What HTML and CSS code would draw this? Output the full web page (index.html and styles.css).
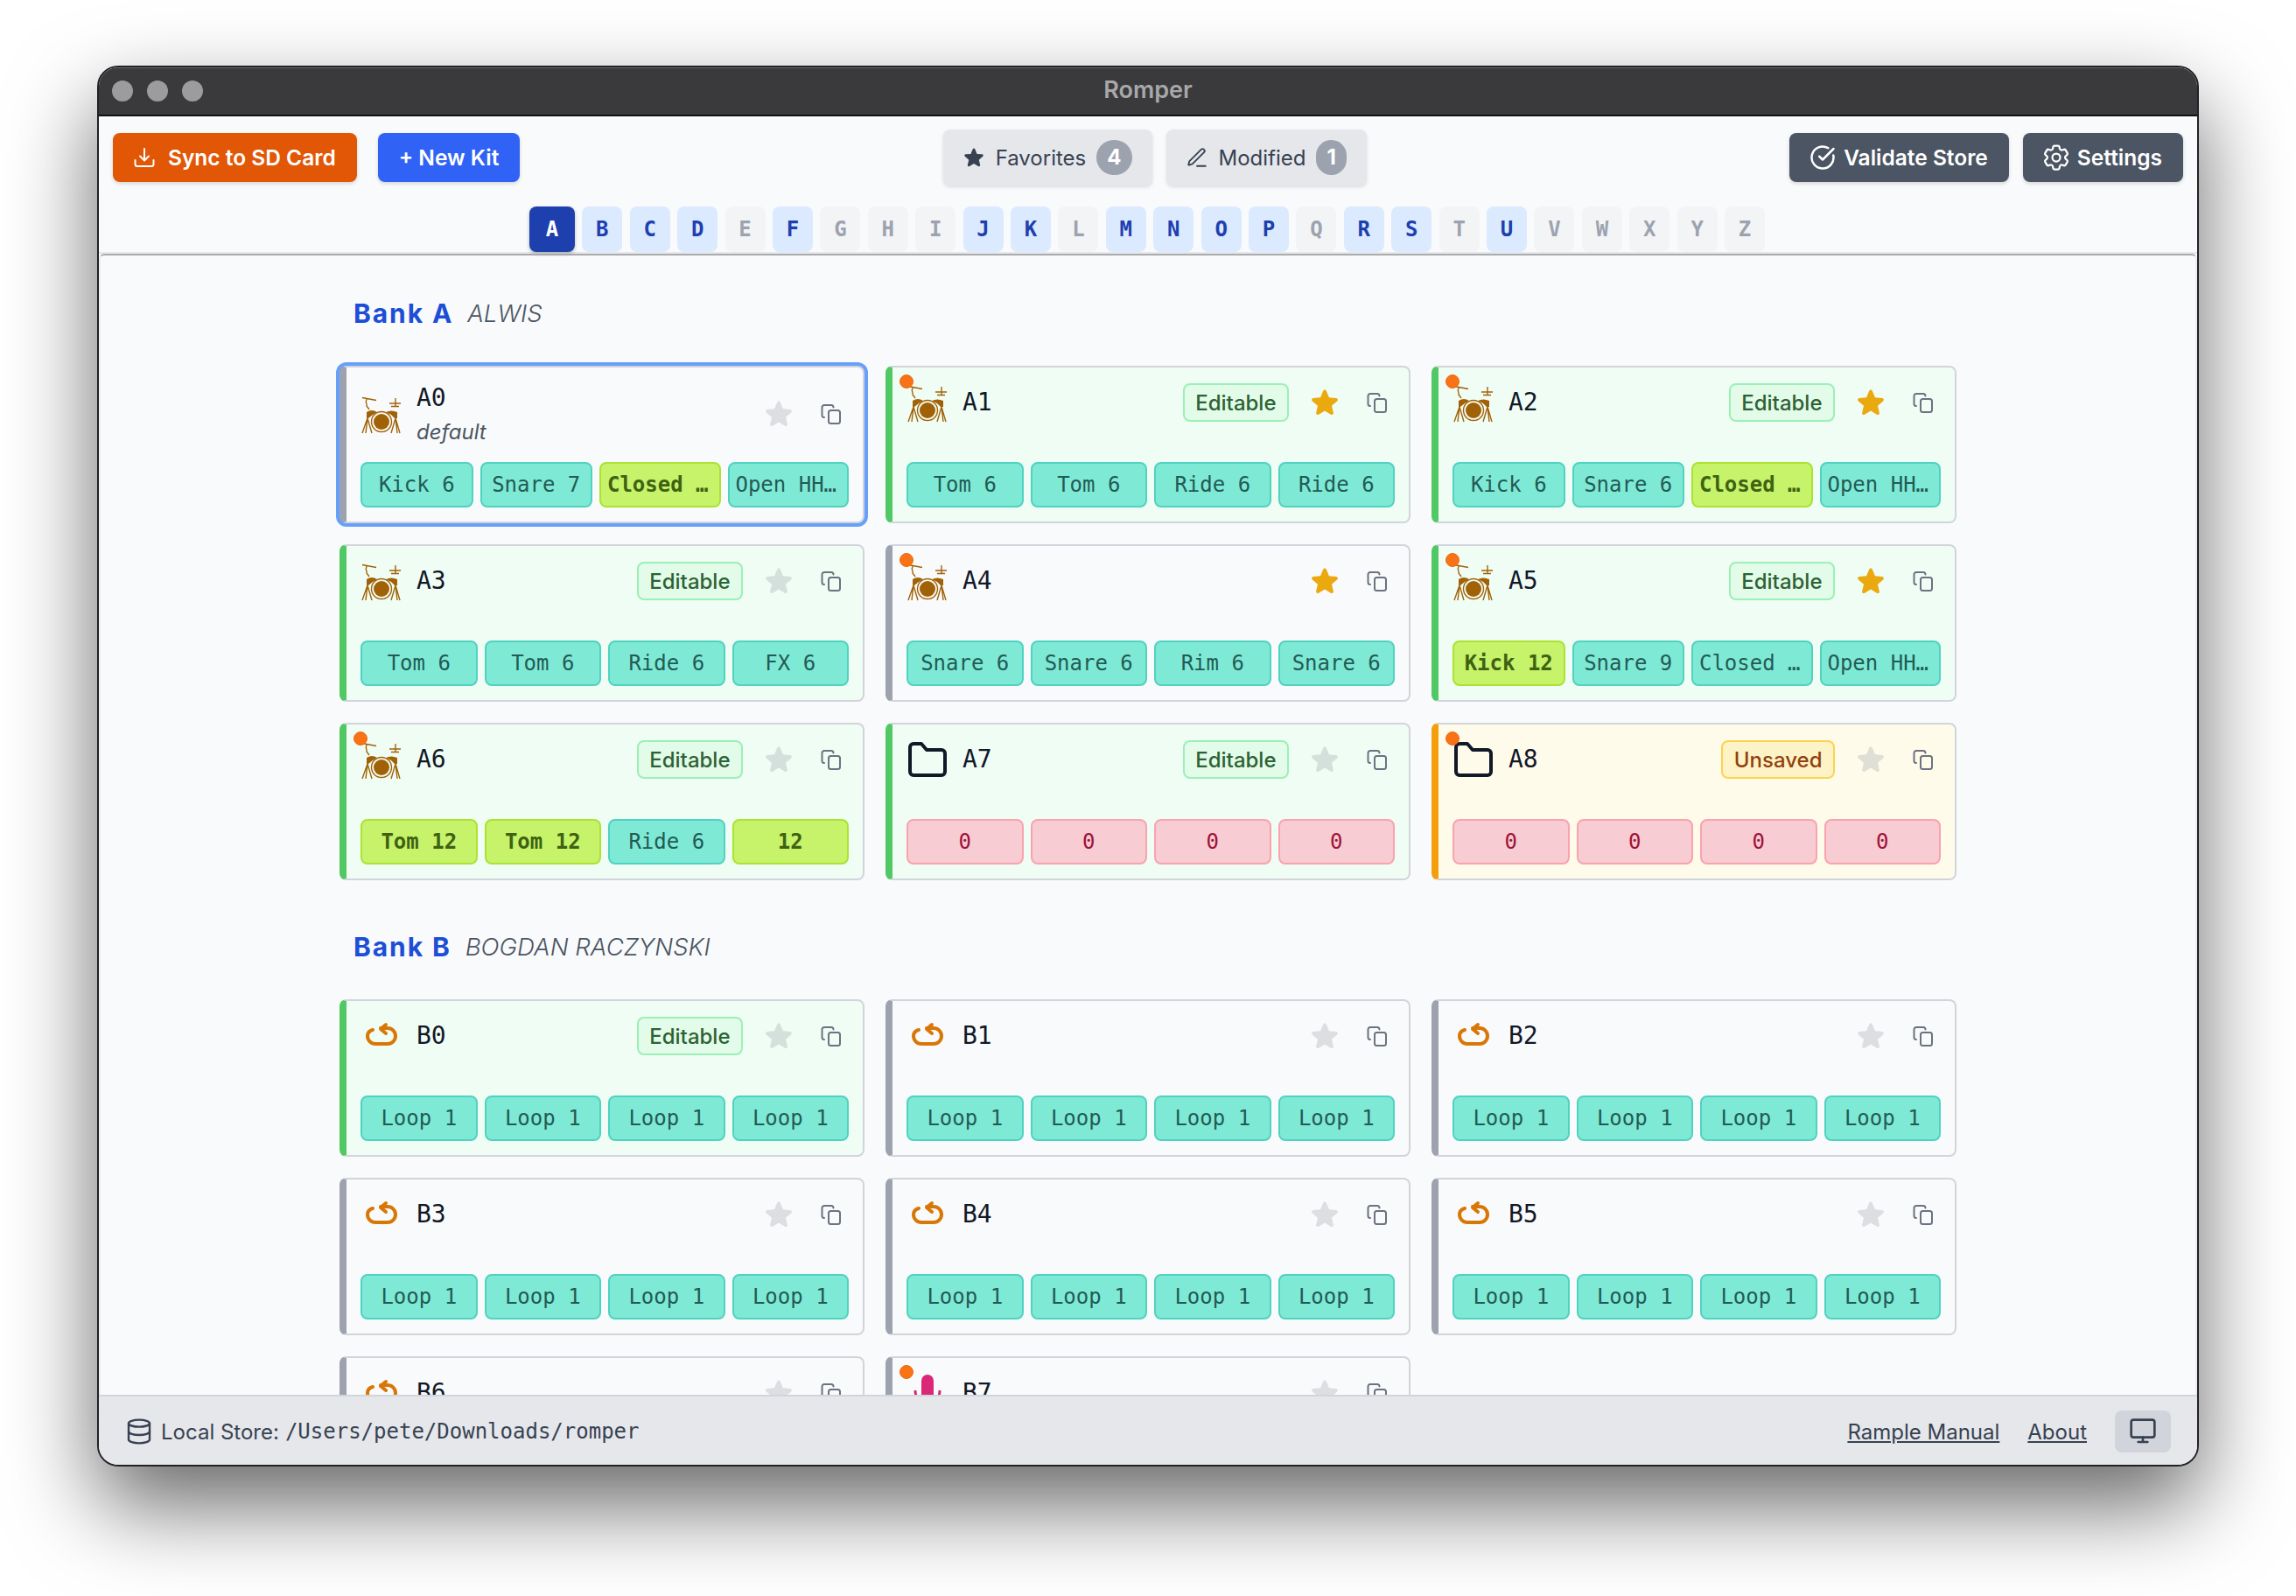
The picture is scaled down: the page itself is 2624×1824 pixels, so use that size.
FILE: index.html
```html
<!DOCTYPE html>
<html>
<head>
  <meta charset="utf-8">
  <title>Romper</title>
  <link rel="stylesheet" href="styles.css">
</head>
<body>
<svg class="sprite" xmlns="http://www.w3.org/2000/svg">
  <symbol id="drum" viewBox="0 0 48 48">
    <g fill="none" stroke="#a16207" stroke-width="1.400">
      <path d="M2 5.500l16 3M7 7c-2 4 1 6 0 8l3 4M40 6v9M33 12h13M35 15.500h9"/>
      <path d="M8 29L2 46M8 29l-2 17M8 29l5 17M40 29l-5 17M40 29l2 17M40 29l5 17"/>
      <circle cx="24" cy="33" r="11.500"/>
    </g>
    <g fill="#a16207">
      <circle cx="24" cy="33" r="9"/>
      <path d="M7 22q6-4 12 0l-5 3-5 4H7zM29 22q6-3 13 0v7h-3l-4-4z"/>
    </g>
  </symbol>
  <symbol id="folder" viewBox="0 0 48 48">
    <path fill="none" stroke="#111827" stroke-width="4" stroke-linejoin="round" d="M8 6h9l6 7h17a4 4 0 0 1 4 4v21a4 4 0 0 1-4 4H8a4 4 0 0 1-4-4V10a4 4 0 0 1 4-4z"/>
  </symbol>
  <symbol id="loop" viewBox="0 0 48 48">
    <path fill="none" stroke="#d97706" stroke-width="4" stroke-linecap="round" stroke-linejoin="round" d="M14 17c-3.500 1-6 3.500-6 7 0 5 4 9 9 9h14c5 0 9-4 9-9s-4-9-9-9h-8M29 11l-6 5 6 5"/>
  </symbol>
  <symbol id="mic" viewBox="0 0 48 48">
    <rect x="17" y="3" width="14" height="30" rx="7" fill="#db2777"/>
    <path fill="none" stroke="#db2777" stroke-width="3" d="M10 21c0 9 6 15 14 15s14-6 14-15M24 36v8"/>
  </symbol>
  <symbol id="star" viewBox="0 0 24 24">
    <path d="M10.788 3.210c.448-1.077 1.976-1.077 2.424 0l2.082 5.006 5.404.434c1.164.093 1.636 1.545.749 2.305l-4.117 3.527 1.257 5.273c.271 1.136-.964 2.033-1.960 1.425L12 18.354 7.373 21.180c-.996.608-2.231-.290-1.960-1.425l1.257-5.273-4.117-3.527c-.887-.760-.415-2.212.749-2.305l5.404-.434 2.082-5.005z"/>
  </symbol>
  <symbol id="copy" viewBox="0 0 24 24">
    <g fill="none" stroke="#6b7280" stroke-width="2" stroke-linecap="round">
      <rect x="9" y="8" width="13" height="15" rx="2.500"/>
      <path d="M4 16a2.500 2.500 0 0 1-2.500-2.500v-9A2.500 2.500 0 0 1 4 2h8a2.500 2.500 0 0 1 2.500 2.500"/>
    </g>
  </symbol>
</svg>

<div class="window">
  <div class="titlebar">
    <div class="lights"><span></span><span></span><span></span></div>
    <div class="win-title">Romper</div>
  </div>

  <div class="toolbar">
    <div class="tool-row">
      <div class="tool-group">
        <button class="btn btn-orange">
          <svg class="btn-icon" viewBox="0 0 24 24" fill="none" stroke="#fff" stroke-width="2" stroke-linecap="round" stroke-linejoin="round"><path d="M12 2v13M7 10.500l5 5 5-5M1.500 15v4.500A2.500 2.500 0 0 0 4 22h16a2.500 2.500 0 0 0 2.500-2.500V15"/></svg>
          Sync to SD Card
        </button>
        <button class="btn btn-blue">+ New Kit</button>
      </div>
      <div class="tool-group tool-center">
        <button class="filter">
          <svg class="filter-icon" viewBox="0 0 24 24" fill="#374151"><use href="#star"/></svg>
          Favorites <span class="count">4</span>
        </button>
        <button class="filter">
          <svg class="filter-icon" viewBox="0 0 24 24" fill="none" stroke="#374151" stroke-width="1.700" stroke-linecap="round" stroke-linejoin="round"><path d="M12 21h9M16.376 3.622a1 1 0 0 1 3.002 3.002L7.368 18.635a2 2 0 0 1-.855.506l-2.872.838a.5.5 0 0 1-.62-.62l.838-2.872a2 2 0 0 1 .506-.854z"/></svg>
          Modified <span class="count">1</span>
        </button>
      </div>
      <div class="tool-group">
        <button class="btn btn-slate">
          <svg class="btn-icon-lg" viewBox="0 0 24 24" fill="none" stroke="#fff" stroke-width="2" stroke-linecap="round" stroke-linejoin="round"><path d="M21.801 10A10 10 0 1 1 17 3.335"/><path d="M9 11l3 3L22 4"/></svg>
          Validate Store
        </button>
        <button class="btn btn-slate">
          <svg class="btn-icon-gear" viewBox="0 0 24 24" fill="none" stroke="#fff" stroke-width="1.500" stroke-linecap="round" stroke-linejoin="round"><path d="M9.594 3.940c.09-.542.56-.94 1.110-.94h2.593c.55 0 1.020.398 1.110.94l.213 1.281c.063.374.313.686.645.870.074.04.147.083.22.127.325.196.72.257 1.075.124l1.217-.456a1.125 1.125 0 0 1 1.370.49l1.296 2.247a1.125 1.125 0 0 1-.26 1.431l-1.003.827c-.293.241-.438.613-.43.992a7.723 7.723 0 0 1 0 .255c-.008.378.137.75.43.991l1.004.827c.424.35.534.955.26 1.430l-1.298 2.247a1.125 1.125 0 0 1-1.369.491l-1.217-.456c-.355-.133-.75-.072-1.076.124a6.470 6.470 0 0 1-.22.128c-.331.183-.581.495-.644.869l-.213 1.281c-.09.543-.56.94-1.110.94h-2.594c-.55 0-1.019-.398-1.110-.94l-.213-1.281c-.062-.374-.312-.686-.644-.870a6.520 6.520 0 0 1-.22-.127c-.325-.196-.72-.257-1.076-.124l-1.217.456a1.125 1.125 0 0 1-1.369-.49l-1.297-2.247a1.125 1.125 0 0 1 .26-1.431l1.004-.827c.292-.24.437-.613.43-.991a6.932 6.932 0 0 1 0-.255c.007-.38-.138-.751-.43-.992l-1.004-.827a1.125 1.125 0 0 1-.26-1.430l1.297-2.247a1.125 1.125 0 0 1 1.370-.491l1.216.456c.356.133.751.072 1.076-.124.072-.044.146-.086.22-.128.332-.183.582-.495.644-.869l.214-1.280z"/><path d="M15 12a3 3 0 1 1-6 0 3 3 0 0 1 6 0z"/></svg>
          Settings
        </button>
      </div>
    </div>
    <div class="letters">
      <span class="letter selected">A</span><span class="letter on">B</span><span class="letter on">C</span><span class="letter on">D</span><span class="letter">E</span><span class="letter on">F</span><span class="letter">G</span><span class="letter">H</span><span class="letter">I</span><span class="letter on">J</span><span class="letter on">K</span><span class="letter">L</span><span class="letter on">M</span><span class="letter on">N</span><span class="letter on">O</span><span class="letter on">P</span><span class="letter">Q</span><span class="letter on">R</span><span class="letter on">S</span><span class="letter">T</span><span class="letter on">U</span><span class="letter">V</span><span class="letter">W</span><span class="letter">X</span><span class="letter">Y</span><span class="letter">Z</span>
    </div>
  </div>

  <div class="main">
    <div class="banks">
      <h2 class="bank-title"><b>Bank A</b> <i>ALWIS</i></h2>
      <div class="kit-grid">

        <div class="card selected">
          <div class="card-head">
            <svg class="kit-icon"><use href="#drum"/></svg>
            <div class="kit-name">A0<em>default</em></div>
            <svg class="star"><use href="#star"/></svg>
            <svg class="copy"><use href="#copy"/></svg>
          </div>
          <div class="slots">
            <span class="slot">Kick 6</span><span class="slot">Snare 7</span><span class="slot long hot">Closed …</span><span class="slot long">Open HH…</span>
          </div>
        </div>

        <div class="card editable">
          <span class="dot"></span>
          <div class="card-head">
            <svg class="kit-icon"><use href="#drum"/></svg>
            <div class="kit-name">A1</div>
            <span class="tag">Editable</span>
            <svg class="star fav"><use href="#star"/></svg>
            <svg class="copy"><use href="#copy"/></svg>
          </div>
          <div class="slots">
            <span class="slot">Tom 6</span><span class="slot">Tom 6</span><span class="slot">Ride 6</span><span class="slot">Ride 6</span>
          </div>
        </div>

        <div class="card editable">
          <span class="dot"></span>
          <div class="card-head">
            <svg class="kit-icon"><use href="#drum"/></svg>
            <div class="kit-name">A2</div>
            <span class="tag">Editable</span>
            <svg class="star fav"><use href="#star"/></svg>
            <svg class="copy"><use href="#copy"/></svg>
          </div>
          <div class="slots">
            <span class="slot">Kick 6</span><span class="slot">Snare 6</span><span class="slot long hot">Closed …</span><span class="slot long">Open HH…</span>
          </div>
        </div>

        <div class="card editable">
          <div class="card-head">
            <svg class="kit-icon"><use href="#drum"/></svg>
            <div class="kit-name">A3</div>
            <span class="tag">Editable</span>
            <svg class="star"><use href="#star"/></svg>
            <svg class="copy"><use href="#copy"/></svg>
          </div>
          <div class="slots">
            <span class="slot">Tom 6</span><span class="slot">Tom 6</span><span class="slot">Ride 6</span><span class="slot">FX 6</span>
          </div>
        </div>

        <div class="card">
          <span class="dot"></span>
          <div class="card-head">
            <svg class="kit-icon"><use href="#drum"/></svg>
            <div class="kit-name">A4</div>
            <svg class="star fav"><use href="#star"/></svg>
            <svg class="copy"><use href="#copy"/></svg>
          </div>
          <div class="slots">
            <span class="slot">Snare 6</span><span class="slot">Snare 6</span><span class="slot">Rim 6</span><span class="slot">Snare 6</span>
          </div>
        </div>

        <div class="card editable">
          <span class="dot"></span>
          <div class="card-head">
            <svg class="kit-icon"><use href="#drum"/></svg>
            <div class="kit-name">A5</div>
            <span class="tag">Editable</span>
            <svg class="star fav"><use href="#star"/></svg>
            <svg class="copy"><use href="#copy"/></svg>
          </div>
          <div class="slots">
            <span class="slot hot">Kick 12</span><span class="slot">Snare 9</span><span class="slot long">Closed …</span><span class="slot long">Open HH…</span>
          </div>
        </div>

        <div class="card editable">
          <span class="dot"></span>
          <div class="card-head">
            <svg class="kit-icon"><use href="#drum"/></svg>
            <div class="kit-name">A6</div>
            <span class="tag">Editable</span>
            <svg class="star"><use href="#star"/></svg>
            <svg class="copy"><use href="#copy"/></svg>
          </div>
          <div class="slots">
            <span class="slot hot">Tom 12</span><span class="slot hot">Tom 12</span><span class="slot">Ride 6</span><span class="slot hot">12</span>
          </div>
        </div>

        <div class="card editable">
          <div class="card-head">
            <svg class="kit-icon"><use href="#folder"/></svg>
            <div class="kit-name">A7</div>
            <span class="tag">Editable</span>
            <svg class="star"><use href="#star"/></svg>
            <svg class="copy"><use href="#copy"/></svg>
          </div>
          <div class="slots">
            <span class="slot empty">0</span><span class="slot empty">0</span><span class="slot empty">0</span><span class="slot empty">0</span>
          </div>
        </div>

        <div class="card unsaved">
          <span class="dot"></span>
          <div class="card-head">
            <svg class="kit-icon"><use href="#folder"/></svg>
            <div class="kit-name">A8</div>
            <span class="tag tag-unsaved">Unsaved</span>
            <svg class="star"><use href="#star"/></svg>
            <svg class="copy"><use href="#copy"/></svg>
          </div>
          <div class="slots">
            <span class="slot empty">0</span><span class="slot empty">0</span><span class="slot empty">0</span><span class="slot empty">0</span>
          </div>
        </div>
      </div>

      <h2 class="bank-title"><b>Bank B</b> <i>BOGDAN RACZYNSKI</i></h2>
      <div class="kit-grid">

        <div class="card editable">
          <div class="card-head">
            <svg class="kit-icon"><use href="#loop"/></svg>
            <div class="kit-name">B0</div>
            <span class="tag">Editable</span>
            <svg class="star"><use href="#star"/></svg>
            <svg class="copy"><use href="#copy"/></svg>
          </div>
          <div class="slots">
            <span class="slot">Loop 1</span><span class="slot">Loop 1</span><span class="slot">Loop 1</span><span class="slot">Loop 1</span>
          </div>
        </div>

        <div class="card">
          <div class="card-head">
            <svg class="kit-icon"><use href="#loop"/></svg>
            <div class="kit-name">B1</div>
            <svg class="star"><use href="#star"/></svg>
            <svg class="copy"><use href="#copy"/></svg>
          </div>
          <div class="slots">
            <span class="slot">Loop 1</span><span class="slot">Loop 1</span><span class="slot">Loop 1</span><span class="slot">Loop 1</span>
          </div>
        </div>

        <div class="card">
          <div class="card-head">
            <svg class="kit-icon"><use href="#loop"/></svg>
            <div class="kit-name">B2</div>
            <svg class="star"><use href="#star"/></svg>
            <svg class="copy"><use href="#copy"/></svg>
          </div>
          <div class="slots">
            <span class="slot">Loop 1</span><span class="slot">Loop 1</span><span class="slot">Loop 1</span><span class="slot">Loop 1</span>
          </div>
        </div>

        <div class="card">
          <div class="card-head">
            <svg class="kit-icon"><use href="#loop"/></svg>
            <div class="kit-name">B3</div>
            <svg class="star"><use href="#star"/></svg>
            <svg class="copy"><use href="#copy"/></svg>
          </div>
          <div class="slots">
            <span class="slot">Loop 1</span><span class="slot">Loop 1</span><span class="slot">Loop 1</span><span class="slot">Loop 1</span>
          </div>
        </div>

        <div class="card">
          <div class="card-head">
            <svg class="kit-icon"><use href="#loop"/></svg>
            <div class="kit-name">B4</div>
            <svg class="star"><use href="#star"/></svg>
            <svg class="copy"><use href="#copy"/></svg>
          </div>
          <div class="slots">
            <span class="slot">Loop 1</span><span class="slot">Loop 1</span><span class="slot">Loop 1</span><span class="slot">Loop 1</span>
          </div>
        </div>

        <div class="card">
          <div class="card-head">
            <svg class="kit-icon"><use href="#loop"/></svg>
            <div class="kit-name">B5</div>
            <svg class="star"><use href="#star"/></svg>
            <svg class="copy"><use href="#copy"/></svg>
          </div>
          <div class="slots">
            <span class="slot">Loop 1</span><span class="slot">Loop 1</span><span class="slot">Loop 1</span><span class="slot">Loop 1</span>
          </div>
        </div>

        <div class="card">
          <div class="card-head">
            <svg class="kit-icon"><use href="#loop"/></svg>
            <div class="kit-name">B6</div>
            <svg class="star"><use href="#star"/></svg>
            <svg class="copy"><use href="#copy"/></svg>
          </div>
        </div>

        <div class="card">
          <span class="dot"></span>
          <div class="card-head">
            <svg class="kit-icon"><use href="#mic"/></svg>
            <div class="kit-name">B7</div>
            <svg class="star"><use href="#star"/></svg>
            <svg class="copy"><use href="#copy"/></svg>
          </div>
        </div>
      </div>
    </div>
  </div>

  <div class="footer">
    <div class="store">
      <svg class="store-icon" viewBox="0 0 24 24" fill="none" stroke="#374151" stroke-width="1.800" stroke-linecap="round" stroke-linejoin="round"><ellipse cx="12" cy="5" rx="9" ry="3"/><path d="M3 5v14a9 3 0 0 0 18 0V5"/><path d="M3 12a9 3 0 0 0 18 0"/></svg>
      Local Store: <span class="path">/Users/pete/Downloads/romper</span>
    </div>
    <div class="foot-links">
      <a href="#">Rample Manual</a>
      <a href="#">About</a>
      <button class="theme-btn">
        <svg viewBox="0 0 24 24" fill="none" stroke="#374151" stroke-width="2" stroke-linecap="round" stroke-linejoin="round"><rect x="2" y="2" width="20" height="15" rx="2"/><path d="M12 17v4M8 21h8"/></svg>
      </button>
    </div>
  </div>
</div>
</body>
</html>
```

FILE: styles.css
```css
* { box-sizing: border-box; }
body {
  margin: 0;
  height: 1824px;
  overflow: hidden;
  background: #fff;
  font-family: Inter, "Liberation Sans", sans-serif;
  color: #111827;
}
.sprite { display: none; }
button { font-family: inherit; border: none; }

.window {
  display: flex;
  flex-direction: column;
  width: 2402px;
  height: 1601px;
  margin: 75px 0 0 111px;
  border: 2px solid #222224;
  border-radius: 24px;
  overflow: hidden;
  background: #f9fafb;
  box-shadow: 0 44px 100px rgba(0, 0, 0, .6);
}

/* title bar */
.titlebar {
  display: flex;
  align-items: center;
  justify-content: center;
  position: relative;
  flex: none;
  height: 56px;
  padding-bottom: 3px;
  background: #3a3a3c;
  border-bottom: 2px solid #111;
  box-shadow: inset 0 1px 0 #68686a;
}
.lights {
  position: absolute;
  left: 15px;
  top: 15px;
  display: flex;
  gap: 16px;
}
.lights span {
  width: 24px;
  height: 24px;
  border-radius: 50%;
  background: #9c9c9e;
}
.win-title {
  font-size: 27px;
  font-weight: 600;
  color: #a8a8a8;
}

/* toolbar */
.toolbar {
  flex: none;
  padding: 15px 16px 0;
  border-bottom: 2px solid #e5e7eb;
}
.tool-row {
  display: flex;
  align-items: center;
  justify-content: space-between;
  height: 64px;
}
.tool-group {
  display: flex;
  align-items: center;
  gap: 16px;
}
.tool-group:first-child { gap: 24px; }
.btn {
  display: flex;
  align-items: center;
  gap: 12px;
  height: 56px;
  padding: 0 24px;
  border-radius: 8px;
  color: #fff;
  font-size: 24.500px;
  font-weight: 600;
  box-shadow: 0 2px 4px rgba(0, 0, 0, .15);
}
.btn-orange { background: #e25706; gap: 15px; }
.btn-blue { background: #2f62f5; }
.btn-slate { background: #4b5563; gap: 10px; }
.btn-icon { width: 24px; height: 24px; }
.btn-icon-lg { width: 30px; height: 30px; margin: 0 -1px; }
.btn-icon-gear { width: 36px; height: 36px; margin: 0 -4px; }
.filter {
  display: flex;
  align-items: center;
  gap: 12px;
  height: 64px;
  padding: 0 23px 0 22px;
  border-radius: 8px;
  background: #e5e7eb;
  color: #374151;
  font-size: 24px;
  font-weight: 400;
  box-shadow: 0 2px 4px rgba(0, 0, 0, .12);
}
.filter-icon { width: 26px; height: 26px; }
.count {
  height: 40px;
  padding: 0 12px;
  line-height: 40px;
  border-radius: 20px;
  background: #9ca3af;
  color: #fff;
  font-size: 24px;
  font-weight: 700;
  text-align: center;
}
.letters {
  display: flex;
  justify-content: center;
  gap: 8.420px;
  margin-top: 24px;
  padding-right: 2px;
}
.letter {
  width: 46px;
  height: 52px;
  border-radius: 8px;
  background: #f3f4f6;
  color: #9ca3af;
  font: 700 24px/52px "DejaVu Sans Mono", monospace;
  text-align: center;
}
.letter.on {
  background: #dbeafe;
  color: #1e40af;
}
.letter.selected {
  width: 52px;
  background: #1e40af;
  color: #fff;
  box-shadow: 0 2px 4px rgba(0, 0, 0, .25);
}

/* main scroll area */
.main {
  flex: 1;
  min-height: 0;
  overflow: hidden;
  border-top: 2px solid #a9abaf;
  border-left: 2px solid #eceef1;
  border-right: 2px solid #eceef1;
  border-radius: 6px 6px 0 0;
}
.banks {
  width: 1848px;
  margin: 0 auto;
}
.bank-title {
  display: flex;
  align-items: center;
  gap: 16px;
  height: 42px;
  margin: 45px 0 39px;
  padding-left: 16px;
  font-size: 30px;
  font-weight: 400;
}
.bank-title + .kit-grid { margin-bottom: 55px; }
.bank-title b {
  color: #1d4ed8;
  font-weight: 700;
  letter-spacing: 1.900px;
}
.bank-title i {
  color: #4b5563;
  font-size: 27.600px;
  font-weight: 300;
}
.kit-grid {
  display: grid;
  grid-template-columns: repeat(3, 600px);
  gap: 24px;
}

/* kit card */
.card {
  position: relative;
  display: flex;
  flex-direction: column;
  justify-content: space-between;
  height: 180px;
  padding: 14px 16px 16px;
  background: #f9fafb;
  border: 2px solid #d1d5db;
  border-left: 8px solid #9ca3af;
  border-radius: 8px;
}
.card.selected { box-shadow: 0 0 0 4px #66a0fa; }
.card.editable {
  background: #f0fdf4;
  border-left-color: #50c863;
}
.card.unsaved {
  background: #fffbeb;
  border-left-color: #f59e0b;
}
.dot {
  position: absolute;
  left: 8px;
  top: 8px;
  width: 16px;
  height: 16px;
  border-radius: 50%;
  background: #f97316;
  border: 1px solid #ea6a10;
  z-index: 1;
}
.card-head {
  display: flex;
  align-items: center;
  min-height: 52px;
}
.kit-icon {
  flex: none;
  width: 48px;
  height: 48px;
  margin-right: 16px;
}
.kit-name {
  flex: 1;
  font: 28px/42px "DejaVu Sans Mono", monospace;
}
.kit-name em {
  display: block;
  color: #4b5563;
  font: italic 24px/36px Inter, sans-serif;
}
.tag {
  height: 44px;
  padding: 0 12.500px;
  line-height: 41px;
  border: 2px solid #9af0b5;
  border-radius: 8px;
  background: #e3fbe9;
  color: #2c6234;
  font-size: 24px;
  font-weight: 500;
  margin-right: 23px;
}
.tag-unsaved {
  border-color: #fcd34d;
  background: #fef3c7;
  color: #92400e;
}
.star {
  flex: none;
  width: 36px;
  height: 36px;
  fill: #6b7280;
  opacity: .2;
}
.star.fav {
  fill: #e9a90f;
  opacity: 1;
}
.copy {
  flex: none;
  width: 24px;
  height: 24px;
  margin: 0 8px 0 30px;
}
.slots {
  display: flex;
  gap: 8px;
}
.slot {
  flex: 128 1 0;
  min-width: 0;
  height: 52px;
  padding: 0 4px;
  white-space: nowrap;
  text-align: center;
  border: 2px solid #50d2c0;
  border-radius: 8px;
  background: #7eead5;
  color: #235a55;
  font: 24px/48px "DejaVu Sans Mono", monospace;
}
.slot.long {
  flex-grow: 139;
  text-indent: -5px;
}
.slot.hot {
  border-color: #aae332;
  background: #c6f36a;
  color: #3f6212;
  font-weight: 700;
}
.slot.empty {
  border-color: #f9a3ae;
  background: #f7ccd3;
  color: #9f1239;
}

/* footer */
.footer {
  display: flex;
  align-items: center;
  justify-content: space-between;
  flex: none;
  height: 80px;
  padding: 2px 30px 0 30px;
  background: #e5e7eb;
  border-top: 2px solid #d1d5db;
  color: #374151;
  font-size: 24px;
}
.store {
  display: flex;
  align-items: center;
  gap: 7px;
}
.store-icon { width: 32px; height: 32px; margin-right: 2px; }
.path { font: 24px "DejaVu Sans Mono", monospace; }
.foot-links {
  display: flex;
  align-items: center;
  gap: 32px;
}
.foot-links a {
  color: #374151;
  font-size: 24px;
}
.theme-btn {
  display: flex;
  align-items: center;
  justify-content: center;
  width: 64px;
  height: 48px;
  padding: 0;
  border-radius: 8px;
  background: #d1d5db;
}
.theme-btn svg { width: 32px; height: 32px; }
```
